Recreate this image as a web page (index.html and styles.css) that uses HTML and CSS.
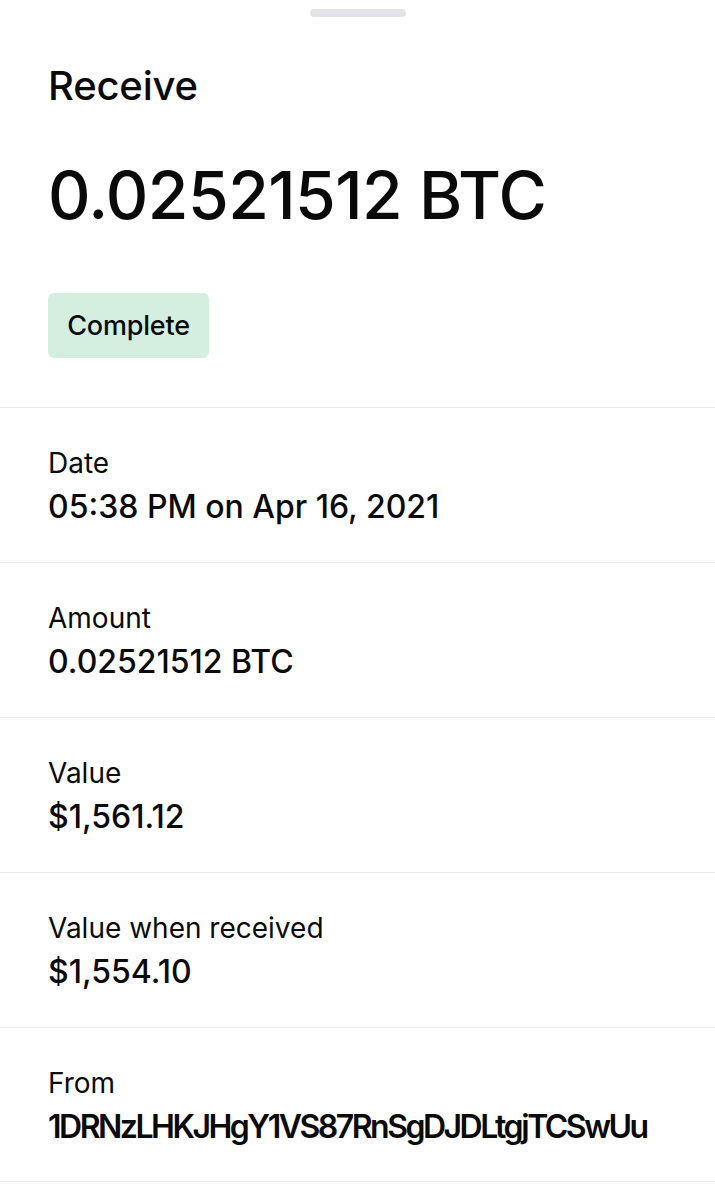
FILE: index.html
```html
<!DOCTYPE html>
<html lang="en">
<head>
<meta charset="utf-8">
<title>Receive</title>
<link rel="stylesheet" href="styles.css">
</head>
<body>
<div class="sheet">
  <div class="handle"></div>
  <header class="head">
    <h1 class="title">Receive</h1>
    <div class="amount">0.02521512 BTC</div>
    <span class="badge">Complete</span>
  </header>
  <ul class="rows">
    <li class="row"><div class="label">Date</div><div class="value">05:38 PM on Apr 16, 2021</div></li>
    <li class="row"><div class="label">Amount</div><div class="value">0.02521512 BTC</div></li>
    <li class="row"><div class="label">Value</div><div class="value">$1,561.12</div></li>
    <li class="row"><div class="label">Value when received</div><div class="value">$1,554.10</div></li>
    <li class="row"><div class="label">From</div><div class="value addr">1DRNzLHKJHgY1VS87RnSgDJDLtgjTCSwUu</div></li>
  </ul>
</div>
</body>
</html>
```
FILE: styles.css
```css
html, body {
  margin: 0;
  padding: 0;
  background: #ffffff;
}
body {
  font-family: Inter, "Noto Sans", sans-serif;
  color: #0a0a0a;
}
.sheet {
  display: flex;
  flex-direction: column;
  padding-top: 9px;
}
.handle {
  align-self: center;
  width: 96px;
  height: 8px;
  border-radius: 4px;
  background: #e2e2e8;
}
.head {
  display: flex;
  flex-direction: column;
  align-items: flex-start;
  padding: 45px 48px 49px;
}
.title {
  margin: 0;
  font-size: 40px;
  font-weight: 500;
  line-height: 48px;
  letter-spacing: -0.2px;
}
.amount {
  margin-top: 47px;
  font-size: 66px;
  font-weight: 500;
  line-height: 76px;
  letter-spacing: -0.6px;
}
.badge {
  margin-top: 60px;
  display: flex;
  align-items: center;
  justify-content: center;
  width: 161px;
  height: 65px;
  border-radius: 6px;
  background: #d4efdf;
  font-size: 27px;
  font-weight: 500;
  letter-spacing: -0.2px;
  box-sizing: border-box;
}
.rows {
  list-style: none;
  margin: 0;
  padding: 0;
}
.row {
  display: flex;
  flex-direction: column;
  gap: 8px;
  height: 155px;
  box-sizing: border-box;
  padding: 38px 48px 0;
  border-top: 1px solid #ececee;
}
.row:last-child {
  border-bottom: 1px solid #ececee;
}
.label {
  font-size: 28px;
  line-height: 34px;
  font-weight: 400;
}
.value {
  font-size: 32px;
  line-height: 38px;
  font-weight: 500;
}
.addr {
  font-weight: 600;
  letter-spacing: -2.5px;
}
```
